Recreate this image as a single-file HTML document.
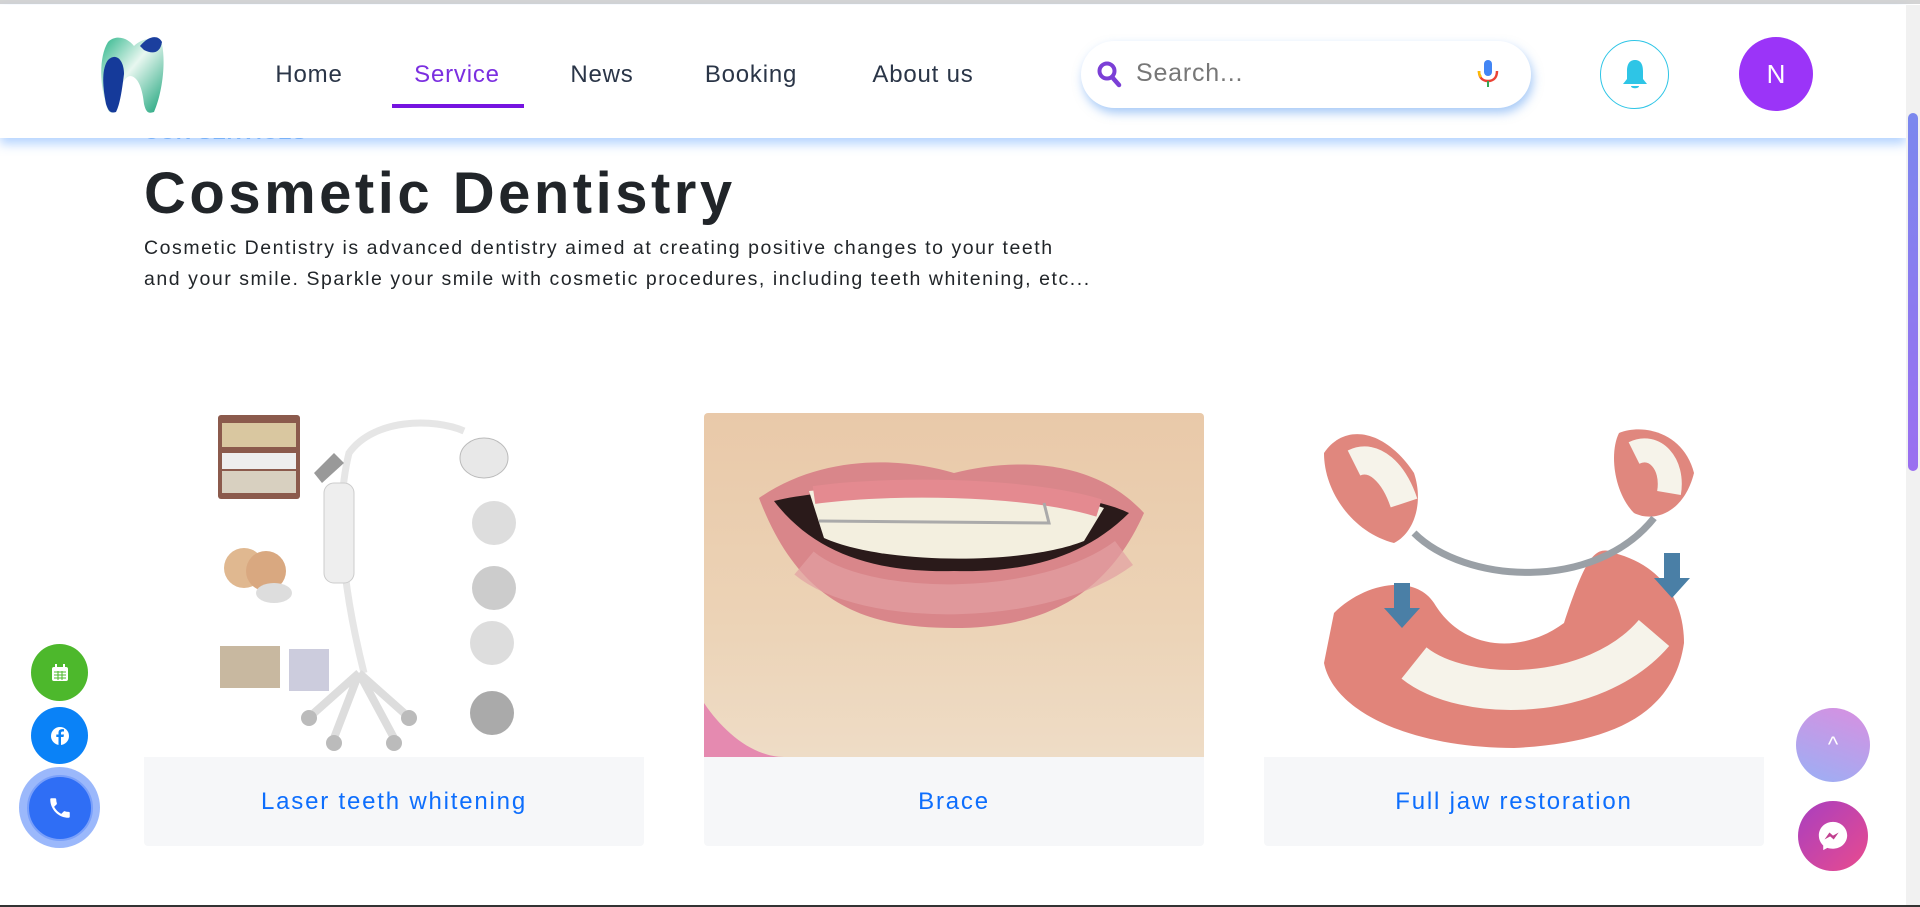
<!DOCTYPE html>
<html><head><meta charset="utf-8"><style>
*{margin:0;padding:0;box-sizing:border-box}
body{width:1920px;height:907px;overflow:hidden;background:#fff;font-family:"Liberation Sans",sans-serif;position:relative}
.abs{position:absolute}
.nav a{position:absolute;top:61px;font-size:24px;color:#2a3547;text-decoration:none;transform:translateX(-50%);white-space:nowrap;letter-spacing:0.8px}
.card{position:absolute;top:413px;width:500px;height:433px}
.card .img{height:344px;overflow:hidden;border-radius:4px 4px 0 0}
.card .lbl{height:89px;background:#f6f7f9;color:#0d6efd;font-size:24px;text-align:center;line-height:89px;border-radius:0 0 4px 4px;letter-spacing:1.8px}
.circ{position:absolute;border-radius:50%;display:flex;align-items:center;justify-content:center}
</style></head><body>
<div class="abs" style="left:0;top:0;width:1920px;height:4px;background:#d4d4d4"></div>
<div class="abs" style="left:144px;top:122px;font-size:20px;font-weight:bold;color:#8fbdf3;letter-spacing:1px">OUR SERVICES</div>
<!-- header -->
<div class="abs" style="left:0;top:5px;width:1906px;height:133px;background:#fff;box-shadow:0 6px 10px rgba(90,160,255,0.45)"></div>
<svg class="abs" style="left:96px;top:34px" width="72" height="80" viewBox="0 0 72 80">
<defs><linearGradient id="g1" x1="0" y1="0" x2="1" y2="1"><stop offset="0" stop-color="#2cb58a"/><stop offset=".45" stop-color="#e8f7f0"/><stop offset="1" stop-color="#1aa37a"/></linearGradient></defs>
<path d="M12 8 C20 0 32 4 38 12 C46 4 60 2 66 10 C70 30 66 60 58 78 C52 80 50 78 48 70 C46 50 40 42 34 42 C26 44 24 56 22 72 C20 80 14 80 12 76 C4 56 2 24 12 8Z" fill="url(#g1)"/>
<path d="M12 26 C20 18 28 26 28 40 C26 56 24 70 20 78 C14 80 12 76 10 70 C6 50 6 34 12 26Z" fill="#153a9a"/>
<path d="M44 12 C52 2 62 0 66 8 C64 20 56 20 48 16Z" fill="#1b3f9e"/>
</svg>
<div class="nav">
<a style="left:309px">Home</a>
<a style="left:457px;color:#7b2fe0">Service</a>
<a style="left:602px">News</a>
<a style="left:751px">Booking</a>
<a style="left:923px">About us</a>
</div>
<div class="abs" style="left:392px;top:104px;width:132px;height:4px;background:#7614e0"></div>
<div class="abs" style="left:1081px;top:41px;width:450px;height:67px;border-radius:34px;background:#fff;box-shadow:2px 5px 10px rgba(80,150,240,0.5)"></div>
<svg class="abs" style="left:1097px;top:61px" width="26" height="28" viewBox="0 0 26 28"><circle cx="10" cy="10" r="7.5" fill="none" stroke="#7b3fd6" stroke-width="4"/><path d="M15 16 L22 24" stroke="#7b3fd6" stroke-width="4.5" stroke-linecap="round"/></svg>
<div class="abs" style="left:1136px;top:59px;font-size:25px;color:#777;letter-spacing:0.8px">Search...</div>
<svg class="abs" style="left:1475px;top:58px" width="26" height="32" viewBox="0 0 26 32"><rect x="9" y="2" width="8" height="16" rx="4" fill="#4285f4"/><path d="M4 13 C4 20 8 23 13 23 C18 23 22 20 22 13" fill="none" stroke="#ea4335" stroke-width="2.5"/><path d="M4 13 C4 16 5 18 6 19" fill="none" stroke="#fbbc05" stroke-width="2.5"/><rect x="12" y="23" width="2" height="6" fill="#34a853"/></svg>
<div class="circ" style="left:1600px;top:40px;width:69px;height:69px;border:1px solid #2ec5e6">
<svg width="30" height="34" viewBox="0 0 30 34"><path d="M15 2 C9 2 7 7 7 13 L7 21 L3 26 L27 26 L23 21 L23 13 C23 7 21 2 15 2Z" fill="#2ec5e6"/><path d="M11 28 L19 28 C19 31 11 31 11 28Z" fill="#2ec5e6"/></svg></div>
<div class="circ" style="left:1739px;top:37px;width:74px;height:74px;background:#9b34f8;color:#fff;font-size:26px">N</div>
<!-- scrollbar -->
<div class="abs" style="left:1906px;top:5px;width:14px;height:900px;background:#f1f1f1"></div>
<div class="abs" style="left:1908px;top:113px;width:10px;height:358px;border-radius:5px;background:linear-gradient(#7b88ee,#9b6ff0)"></div>
<!-- hero -->
<div class="abs" style="left:144px;top:160px;font-size:58px;font-weight:bold;color:#212529;letter-spacing:3.5px;white-space:nowrap">Cosmetic Dentistry</div>
<div class="abs" style="left:144px;top:233px;width:1100px;font-size:19.5px;line-height:31px;color:#212529;letter-spacing:1.55px;white-space:nowrap">Cosmetic Dentistry is advanced dentistry aimed at creating positive changes to your teeth<br>and your smile. Sparkle your smile with cosmetic procedures, including teeth whitening, etc...</div>
<!-- cards -->
<div class="card" style="left:144px"><div class="img" style="background:#fff">
<svg width="500" height="344" viewBox="0 0 500 344">
<rect x="74" y="2" width="82" height="84" rx="3" fill="#8b5a4c"/><rect x="78" y="10" width="74" height="24" fill="#d9c7a0"/><rect x="78" y="40" width="74" height="16" fill="#eee"/><rect x="78" y="58" width="74" height="22" fill="#d8d0c0"/>
<circle cx="100" cy="155" r="20" fill="#e0b890"/><circle cx="122" cy="158" r="20" fill="#d9a880"/><ellipse cx="130" cy="180" rx="18" ry="10" fill="#ddd"/>
<rect x="76" y="233" width="60" height="42" fill="#c8b8a0"/><rect x="145" y="236" width="40" height="42" fill="#ccd"/>
<path d="M220 260 C200 180 190 100 205 40 C230 5 290 5 320 18" fill="none" stroke="#e6e6e6" stroke-width="7"/>
<rect x="180" y="70" width="30" height="100" rx="10" fill="#eee" stroke="#ccc"/>
<path d="M170 60 L190 40 L200 50 L178 70Z" fill="#999"/>
<ellipse cx="340" cy="45" rx="24" ry="20" fill="#e8e8e8" stroke="#bbb"/>
<circle cx="350" cy="110" r="22" fill="#ddd"/><circle cx="350" cy="175" r="22" fill="#ccc"/><circle cx="348" cy="230" r="22" fill="#ddd"/><circle cx="348" cy="300" r="22" fill="#aaa"/>
<path d="M215 260 L170 300 M215 260 L260 300 M215 260 L190 325 M215 260 L250 325" stroke="#ddd" stroke-width="8"/>
<circle cx="165" cy="305" r="8" fill="#bbb"/><circle cx="190" cy="330" r="8" fill="#bbb"/><circle cx="250" cy="330" r="8" fill="#bbb"/><circle cx="265" cy="305" r="8" fill="#bbb"/>
</svg></div><div class="lbl">Laser teeth whitening</div></div>

<div class="card" style="left:704px"><div class="img" style="background:linear-gradient(180deg,#e9c9a9 0%,#ecd3b6 60%,#eedcc6 100%)">
<svg width="500" height="344" viewBox="0 0 500 344">
<path d="M0 290 C20 320 50 344 80 344 L0 344Z" fill="#e58ab0"/>
<path d="M55 85 C120 40 200 45 250 60 C310 45 390 45 440 100 C400 190 330 215 250 215 C160 215 95 190 55 85Z" fill="#d9868a"/>
<path d="M70 88 C140 70 360 68 425 100 C380 145 320 160 250 158 C170 160 110 140 70 88Z" fill="#2a1a1a"/>
<path d="M105 78 C180 70 330 70 400 95 L380 128 C320 152 180 152 120 125Z" fill="#f3efdf"/>
<path d="M110 82 C180 72 320 72 395 95" fill="none" stroke="#e48a90" stroke-width="18"/>
<path d="M115 108 L345 110 L340 90" fill="none" stroke="#aaa" stroke-width="3"/>
<path d="M100 150 C160 200 340 200 420 140" fill="none" stroke="#e3a0a3" stroke-width="30" opacity=".7"/>
</svg></div><div class="lbl">Brace</div></div>

<div class="card" style="left:1264px"><div class="img" style="background:#fff">
<svg width="500" height="344" viewBox="0 0 500 344">
<path d="M60 40 C80 10 120 15 150 60 C160 90 150 120 130 130 C90 120 60 80 60 40Z" fill="#e0877e"/>
<path d="M355 20 C380 10 420 20 430 60 C420 100 390 110 370 100 C350 80 345 40 355 20Z" fill="#e0877e"/>
<path d="M70 200 C100 170 150 160 170 190 C200 240 260 240 300 210 C320 150 330 130 350 140 C390 150 420 180 420 230 C410 300 350 330 250 335 C150 335 70 300 60 250Z" fill="#e1847a"/>
<path d="M150 250 C200 290 330 290 390 220" fill="none" stroke="#f6f3ea" stroke-width="40"/>
<path d="M90 50 C110 40 130 60 140 90" fill="none" stroke="#f6f3ea" stroke-width="28"/>
<path d="M370 40 C390 30 410 50 405 80" fill="none" stroke="#f6f3ea" stroke-width="24"/>
<path d="M150 120 C200 170 330 180 390 105" fill="none" stroke="#9aa0a6" stroke-width="7"/>
<path d="M130 170 L130 195 L120 195 L138 215 L156 195 L146 195 L146 170Z" fill="#4a7fa6"/>
<path d="M400 140 L400 165 L390 165 L408 185 L426 165 L416 165 L416 140Z" fill="#4a7fa6"/>
</svg></div><div class="lbl">Full jaw restoration</div></div>

<!-- floating left -->
<div class="circ" style="left:31px;top:644px;width:57px;height:57px;background:#4db82c"><svg width="20" height="20" viewBox="0 0 20 20"><rect x="2" y="4" width="16" height="14" rx="2" fill="#fff"/><rect x="5" y="1" width="2" height="5" fill="#fff"/><rect x="13" y="1" width="2" height="5" fill="#fff"/><path d="M4 9h12M4 12h12M4 15h12M8 8v9M12 8v9" stroke="#4db82c" stroke-width="1"/></svg></div>
<div class="circ" style="left:31px;top:707px;width:57px;height:57px;background:#0a82f7"><svg width="20" height="20" viewBox="0 0 20 20"><circle cx="10" cy="10" r="9" fill="#fff"/><path d="M11 19 V11 H13.5 L14 8.5 H11 V7 C11 6 11.5 5.5 12.5 5.5 H14 V3.3 C13 3.2 12 3.1 11.5 3.2 C9.5 3.4 8.5 4.6 8.5 6.6 V8.5 H6.3 V11 H8.5 V19Z" fill="#0a82f7"/></svg></div>
<div class="circ" style="left:19px;top:767px;width:81px;height:81px;background:#9bb8fb"><div class="circ" style="position:static;width:66px;height:66px;background:#2f6ef5;border:2px solid #7aa0fa"><svg width="26" height="26" viewBox="0 0 24 24"><path d="M6.6 10.8c1.4 2.8 3.8 5.1 6.6 6.6l2.2-2.2c.3-.3.7-.4 1-.2 1.1.4 2.3.6 3.6.6.6 0 1 .4 1 1V20c0 .6-.4 1-1 1C10.6 21 3 13.4 3 4c0-.6.4-1 1-1h3.5c.6 0 1 .4 1 1 0 1.3.2 2.5.6 3.6.1.3 0 .7-.2 1z" fill="#fff"/></svg></div></div>
<!-- floating right -->
<div class="circ" style="left:1796px;top:708px;width:74px;height:74px;background:linear-gradient(200deg,#d98fe0,#9ab0f5);color:#fff;font-size:22px">^</div>
<div class="circ" style="left:1798px;top:801px;width:70px;height:70px;background:linear-gradient(135deg,#a83fc0,#e94b8e)"><svg width="34" height="34" viewBox="0 0 24 24"><path d="M12 2C6.4 2 2 6.1 2 11.6c0 2.9 1.2 5.4 3.1 7.1V22l2.9-1.6c1.2.4 2.6.6 4 .6 5.6 0 10-4.1 10-9.4S17.6 2 12 2z" fill="#fff"/><path d="M6 14.5l3.5-5 2.5 2.2 4-2.2-3.5 5-2.5-2.2z" fill="#c0408f"/></svg></div>
<div class="abs" style="left:0;top:905px;width:1920px;height:2px;background:#333"></div>
</body></html>
